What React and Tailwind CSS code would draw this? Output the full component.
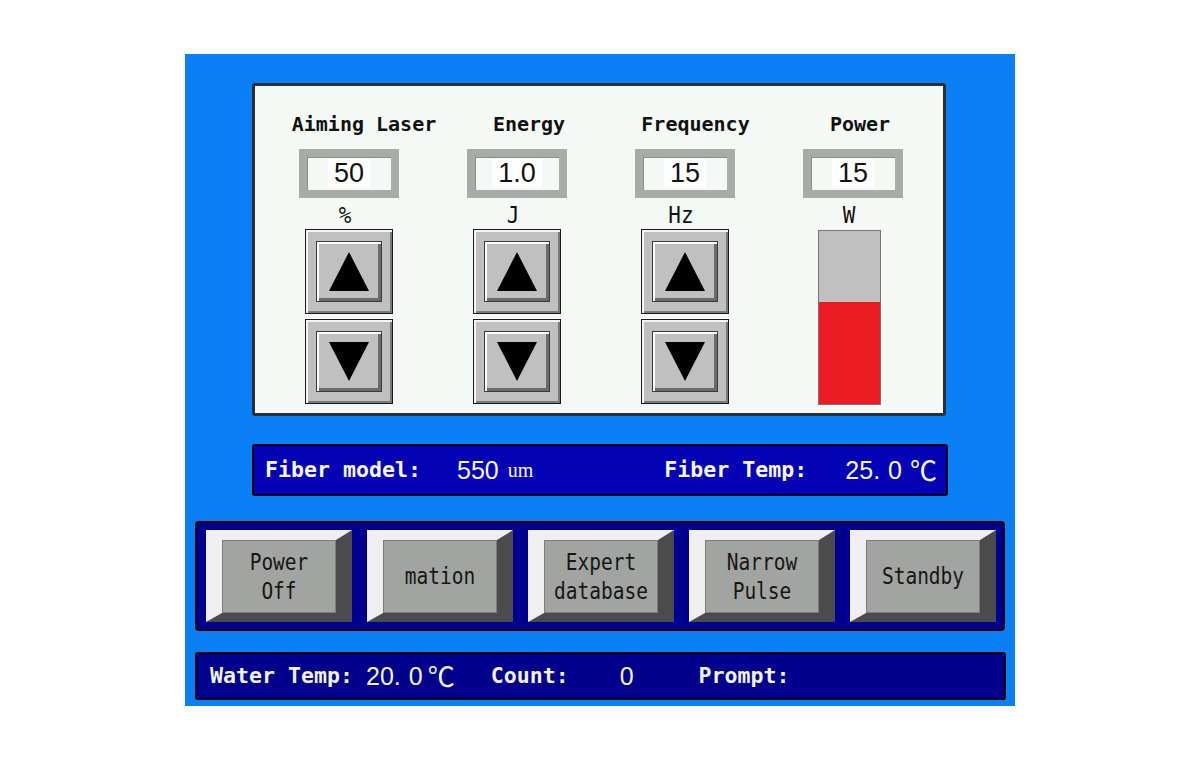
import React from "react";

const Tri = ({ down }) => (
  <svg width="40" height="39" viewBox="0 0 40 39">
    {down ? (
      <polygon points="0,0 40,0 20,39" fill="#000" />
    ) : (
      <polygon points="20,0 40,39 0,39" fill="#000" />
    )}
  </svg>
);

const ArrowBtn = ({ down }) => (
  <div className="w-[88px] h-[85px] border border-[#1a1a1a] bg-[#c0c0c0] shadow-[inset_2px_2px_0_#f4f4f4,inset_-2px_-2px_0_#7a7a7a] flex items-center justify-center">
    <div className="w-[66px] h-[61px] bg-[#c0c0c0] border border-[#3a3a3a] shadow-[inset_2px_2px_0_#ffffff,inset_-3px_-3px_0_#6a6a6a] flex items-center justify-center">
      <Tri down={down} />
    </div>
  </div>
);

const InputBox = ({ children }) => (
  <div className="w-[100px] h-[49px] border-[8px] border-[#a9aba9] bg-[#f5f9f5] shadow-[inset_1px_1px_0_#8c8e8c] flex items-center justify-center">
    <span className="bg-white px-[6px] leading-[29px] text-[27px] text-[#111] font-['Liberation_Sans',sans-serif]">
      {children}
    </span>
  </div>
);

const cols = [
  { label: "Aiming Laser", lpad: "pl-[30px]", value: "50", unit: "%" },
  { label: "Energy", lpad: "pl-[24px]", value: "1.0", unit: "J" },
  { label: "Frequency", lpad: "pl-[21px]", value: "15", unit: "Hz" },
  { label: "Power", lpad: "pl-[14px]", value: "15", unit: "W", bar: true },
];

const ActionBtn = ({ lines }) => (
  <div className="w-[146px] h-[92px] border-l-[16px] border-t-[10px] border-r-[16px] border-b-[9px] border-l-[#efefef] border-t-[#efefef] border-r-[#4b4b4b] border-b-[#4b4b4b] bg-[#a1a4a0] shadow-[inset_0_0_0_1px_#7c7e7c] flex items-center justify-center">
    <div className="scale-y-[1.15] text-center text-[19.5px] leading-[25px] text-[#161616] font-['DejaVu_Sans_Mono',monospace]">
      {lines.map((l, i) => (
        <div key={i}>{l}</div>
      ))}
    </div>
  </div>
);

const valueFont = "font-['Liberation_Sans',sans-serif] text-[25px] leading-[30px]";
const labelFont = "font-['DejaVu_Sans_Mono',monospace] font-bold text-[21.6px] leading-[30px]";
const degFont = "font-['Noto_Sans_CJK_SC',sans-serif] text-[27px] leading-[30px]";

export default function App() {
  return (
    <div className="w-full h-[760px] bg-white flex items-center justify-center">
      <div className="w-[830px] h-[652px] bg-[#0a7ff6] flex flex-col pt-[29px]">
        {/* Top panel */}
        <div className="ml-[67px] w-[694px] h-[333px] border-[3px] border-[#2e2e2e] rounded-[3px] bg-[#f5f9f5] pt-[26px] pl-[10px]">
          <div className="grid grid-cols-[repeat(4,168px)]">
            {cols.map((c, i) => (
              <div key={i} className="flex flex-col items-center">
                <div
                  className={`${c.lpad} h-[24px] leading-[24px] text-[20px] font-bold text-[#111] font-['DejaVu_Sans_Mono',monospace] whitespace-nowrap`}
                >
                  {c.label}
                </div>
                <div className="mt-[13px]">
                  <InputBox>{c.value}</InputBox>
                </div>
                <div className="mt-[7px] pr-[8px] h-[20px] leading-[20px] text-[21px] font-medium text-[#111] font-['DejaVu_Sans_Mono',monospace] scale-y-[1.1]">
                  {c.unit}
                </div>
                {c.bar ? (
                  <div className="mt-[5px] mr-[7px] w-[63px] h-[175px] border border-[#777] bg-[#c0c0c0] flex flex-col justify-end">
                    <div className="h-[102px] bg-[#ed1c24]" />
                  </div>
                ) : (
                  <div className="mt-[4px] flex flex-col gap-[5px]">
                    <ArrowBtn />
                    <ArrowBtn down />
                  </div>
                )}
              </div>
            ))}
          </div>
        </div>

        {/* Fiber bar */}
        <div className="mt-[28px] ml-[67px] w-[696px] h-[52px] border-2 border-black rounded-[3px] bg-[#0404b6] flex items-center pl-[11px] text-[#f8f8f8] whitespace-nowrap">
          <span className={labelFont}>Fiber model:</span>
          <span className={`${valueFont} ml-[36px]`}>550</span>
          <span className="ml-[9px] font-['Liberation_Serif',serif] text-[20px] leading-[30px]">um</span>
          <span className={`${labelFont} ml-[131px]`}>Fiber Temp:</span>
          <span className={`${valueFont} ml-[38px]`}>
            25<span className="mr-[8px]">.</span>0
          </span>
          <span className={`${degFont} ml-[8px]`}>℃</span>
        </div>

        {/* Buttons */}
        <div className="mt-[25px] ml-[10px] w-[810px] h-[110px] bg-[#00008f] border-2 border-black rounded-[4px] flex items-center gap-[15px] pl-[9px]">
          <ActionBtn lines={["Power", "Off"]} />
          <ActionBtn lines={["mation"]} />
          <ActionBtn lines={["Expert", "database"]} />
          <ActionBtn lines={["Narrow", "Pulse"]} />
          <ActionBtn lines={["Standby"]} />
        </div>

        {/* Bottom bar */}
        <div className="mt-[21px] ml-[10px] w-[811px] h-[48px] border-2 border-black rounded-[3px] bg-[#00008c] flex items-center pl-[13px] text-[#f2f2e0] whitespace-nowrap">
          <span className={labelFont}>Water Temp:</span>
          <span className={`${valueFont} ml-[13px]`}>
            20<span className="mr-[8px]">.</span>0
          </span>
          <span className={`${degFont} ml-[5px]`}>℃</span>
          <span className={`${labelFont} ml-[36px]`}>Count:</span>
          <span className={`${valueFont} ml-[51px]`}>0</span>
          <span className={`${labelFont} ml-[65px]`}>Prompt:</span>
        </div>
      </div>
    </div>
  );
}
